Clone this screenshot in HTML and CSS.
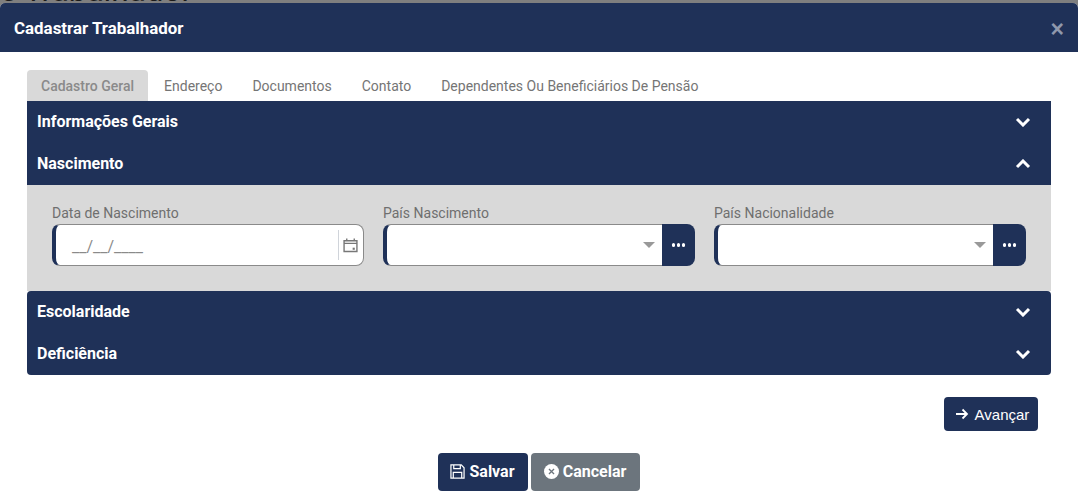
FILE: index.html
```html
<!DOCTYPE html>
<html lang="pt-BR">
  <head>
    <meta charset="UTF-8" />
    <title>Cadastrar Trabalhador</title>
    <link rel="stylesheet" href="styles.css">
  </head>
  <body>
    <div class="backdrop-title">Cadastro de Trabalhador</div>
    <div class="modal">
      <div class="modal-header">
        <h1>Cadastrar Trabalhador</h1>
        <span class="close-button">&times;</span>
      </div>
      <div class="modal-body">
        <ul class="tabs">
          <li class="tab active">Cadastro Geral</li>
          <li class="tab">Endereço</li>
          <li class="tab">Documentos</li>
          <li class="tab">Contato</li>
          <li class="tab">Dependentes Ou Beneficiários De Pensão</li>
        </ul>
        <div class="accordion">
          <div class="acc-header first">
            <span>Informações Gerais</span>
            <svg class="chevron" viewBox="0 0 16 10"><path d="M2 2l6 6 6-6" /></svg>
          </div>
          <div class="acc-header">
            <span>Nascimento</span>
            <svg class="chevron" viewBox="0 0 16 10"><path d="M2 8l6-6 6 6" /></svg>
          </div>
          <div class="acc-body">
            <div class="field">
              <label>Data de Nascimento</label>
              <div class="input-box date">
                <span class="mask">__/__/____</span>
                <span class="cal-sep"></span>
                <svg class="cal-icon" viewBox="0 0 14 14">
                  <path class="cal-line" d="M1 3h12v10H1zM1 5.5h12M3.5 1v2.5M10.5 1v2.5" />
                  <rect class="cal-dot" x="9" y="9.5" width="2" height="2" />
                </svg>
              </div>
            </div>
            <div class="field">
              <label>País Nascimento</label>
              <div class="input-group">
                <div class="input-box select"><span class="caret"></span></div>
                <button class="more-btn"><span></span><span></span><span></span></button>
              </div>
            </div>
            <div class="field">
              <label>País Nacionalidade</label>
              <div class="input-group">
                <div class="input-box select"><span class="caret"></span></div>
                <button class="more-btn"><span></span><span></span><span></span></button>
              </div>
            </div>
          </div>
          <div class="acc-header top-round">
            <span>Escolaridade</span>
            <svg class="chevron" viewBox="0 0 16 10"><path d="M2 2l6 6 6-6" /></svg>
          </div>
          <div class="acc-header last">
            <span>Deficiência</span>
            <svg class="chevron" viewBox="0 0 16 10"><path d="M2 2l6 6 6-6" /></svg>
          </div>
        </div>
        <div class="next-row">
          <button class="btn btn-next">
            <svg class="icon-arrow" viewBox="0 0 14 12"><path d="M1 6h11M7.5 1.5L12 6l-4.500 4.500" /></svg>
            Avançar
          </button>
        </div>
        <div class="footer">
          <button class="btn btn-save">
            <svg class="icon-save" viewBox="0 0 16 16">
              <path d="M1 1h11l3 3v11H1zM4 1v4h7V1M3.500 15V9h9v6" />
            </svg>
            Salvar
          </button>
          <button class="btn btn-cancel">
            <svg class="icon-cancel" viewBox="0 0 16 16">
              <circle cx="8" cy="8" r="8" />
              <path d="M5.300 5.300l5.400 5.400M10.700 5.300l-5.400 5.400" />
            </svg>
            Cancelar
          </button>
        </div>
      </div>
    </div>
  </body>
</html>
```

FILE: styles.css
```css
html,
body {
  margin: 0;
  padding: 0;
  height: 504px;
  overflow: hidden;
  background: #7f7f7f;
  font-family: Roboto, Arial, sans-serif;
}
.backdrop-title {
  position: absolute;
  left: -153px;
  top: -28px;
  font-size: 31.500px;
  line-height: 37px;
  color: #1a1a1a;
  white-space: nowrap;
}
.modal {
  position: relative;
  margin-top: 3px;
  height: 501px;
  background: #fff;
  border-radius: 5px 5px 0 0;
  overflow: hidden;
}
.modal-header {
  height: 49px;
  background: #1f3158;
  display: flex;
  align-items: center;
  justify-content: space-between;
  padding: 0 14px;
}
.modal-header h1 {
  margin: 0;
  font-size: 16.900px;
  font-weight: 700;
  color: #fff;
}
.close-button {
  color: #8f98ac;
  font-family: "Liberation Sans", Arial, sans-serif;
  font-size: 23px;
  font-weight: 700;
  line-height: 20px;
  margin-top: 3px;
  margin-right: 0;
}
.modal-body {
  padding: 18px 27px 0;
}
.tabs {
  list-style: none;
  margin: 0;
  padding: 0;
  display: flex;
  height: 31px;
}
.tab {
  padding: 0 15px;
  font-size: 14px;
  line-height: 32px;
  color: #757575;
}
.tab.active {
  padding: 0 14px;
  background: #d9d9d9;
  color: #8a8a8a;
  font-weight: 500;
  border-radius: 4px 4px 0 0;
  margin-right: 1px;
}
.accordion {
  border-radius: 0 0 4px 4px;
  overflow: hidden;
}
.acc-header {
  height: 42px;
  box-sizing: border-box;
  padding: 0 20px 2px 10px;
  background: #1f3158;
  color: #fff;
  font-size: 16px;
  font-weight: 700;
  display: flex;
  align-items: center;
  justify-content: space-between;
}
.top-round {
  border-radius: 4px 4px 0 0;
}
.chevron {
  width: 16px;
  height: 10px;
  margin-top: 2px;
  fill: none;
  stroke: #fff;
  stroke-width: 3;
}
.acc-body {
  background: #d9d9d9;
  height: 106px;
  box-sizing: border-box;
  padding: 20px 25px 0;
  display: grid;
  grid-template-columns: repeat(3, 312px);
  column-gap: 19px;
}
.field label {
  display: block;
  font-size: 14px;
  line-height: 17px;
  color: #6f6f6f;
  margin-bottom: 2px;
}
.input-group {
  display: flex;
}
.input-box {
  flex: 1;
  box-sizing: border-box;
  height: 42px;
  background: #fff;
  border: 1px solid #8a8a8a;
  border-left: 4px solid #1f3158;
  border-radius: 8px;
  display: flex;
  align-items: center;
}
.input-box.select {
  border-radius: 8px 0 0 8px;
  border-right: 0;
  justify-content: flex-end;
}
.mask {
  flex: 1;
  padding: 2px 0 0 16px;
  font-size: 16px;
  color: #8a8a8a;
}
.cal-sep {
  width: 1px;
  height: 30px;
  background: #d0d4da;
}
.cal-icon {
  width: 15px;
  height: 16px;
  margin: 0 5px 0 4px;
}
.cal-line {
  fill: none;
  stroke: #777;
  stroke-width: 1.300;
}
.cal-dot {
  fill: #777;
}
.caret {
  width: 0;
  height: 0;
  margin-right: 7px;
  border-left: 6px solid transparent;
  border-right: 6px solid transparent;
  border-top: 6px solid #999;
}
.more-btn {
  width: 33px;
  height: 42px;
  padding: 0;
  border: none;
  background: #1f3158;
  border-radius: 0 8px 8px 0;
  display: flex;
  align-items: center;
  justify-content: center;
  gap: 1.500px;
}
.more-btn span {
  width: 3.500px;
  height: 3.500px;
  border-radius: 50%;
  background: #fff;
}
.next-row {
  display: flex;
  justify-content: flex-end;
  padding: 22px 13px 0 0;
}
.btn {
  border: none;
  border-radius: 4px;
  color: #fff;
  font-family: Roboto, Arial, sans-serif;
  display: flex;
  align-items: center;
  justify-content: center;
}
.btn-next {
  width: 94px;
  height: 34px;
  padding: 0 0 0 2px;
  background: #1f3158;
  font-family: "Liberation Sans", Arial, sans-serif;
  font-size: 15px;
  gap: 6px;
}
.icon-arrow {
  width: 14px;
  height: 12px;
  fill: none;
  stroke: #fff;
  stroke-width: 1.800;
}
.footer {
  display: flex;
  justify-content: center;
  gap: 3px;
  margin-top: 22px;
  padding-right: 1px;
}
.btn-save,
.btn-cancel {
  height: 38px;
  padding: 0 0 2px;
  font-size: 16px;
  font-weight: 700;
  gap: 4px;
}
.btn-save {
  width: 90px;
  background: #1f3158;
}
.btn-cancel {
  width: 109px;
  background: #6c757d;
}
.icon-save {
  width: 15px;
  height: 15px;
  fill: none;
  stroke: #fff;
  stroke-width: 1.300;
}
.icon-cancel {
  width: 15px;
  height: 15px;
}
.icon-cancel circle {
  fill: #fff;
}
.icon-cancel path {
  fill: none;
  stroke: #6c757d;
  stroke-width: 1.400;
}
```
